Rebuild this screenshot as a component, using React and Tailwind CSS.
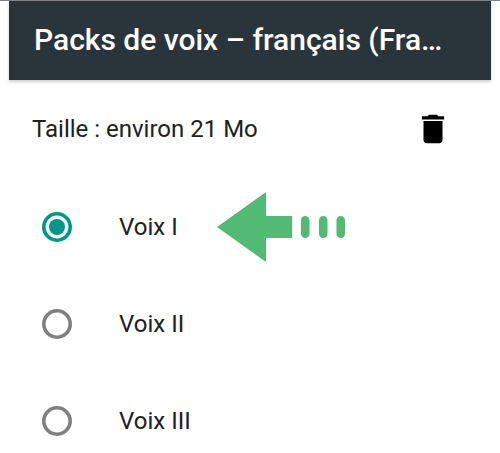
import React from 'react';

const voices = [
  { name: 'Voix I', selected: true },
  { name: 'Voix II', selected: false },
  { name: 'Voix III', selected: false },
];

const Radio = ({ selected }) => (
  <svg width="30" height="30" viewBox="0 0 30 30" fill="none">
    <circle cx="15" cy="15" r="13.2" strokeWidth="3.6" stroke={selected ? '#009688' : '#808080'} />
    {selected && <circle cx="15" cy="15" r="8" fill="#009688" />}
  </svg>
);

const Arrow = () => (
  <svg className="absolute left-[217px] top-[192px]" width="128" height="70" viewBox="0 0 128 70">
    <path d="M0 35 L49 0 V24 H75 V46 H49 V70 Z" fill="#52ba72" />
    <rect x="84" y="24" width="8.5" height="22" rx="4.25" fill="#52ba72" />
    <rect x="102" y="24" width="8.5" height="22" rx="4.25" fill="#52ba72" />
    <rect x="119.5" y="24" width="8.5" height="22" rx="4.25" fill="#52ba72" />
  </svg>
);

export default function App() {
  return (
    <div className="relative h-[453px] w-[500px] overflow-hidden bg-white font-['Roboto',sans-serif]">
      <div className="h-px bg-[#7d8487]" />
      <div className="mx-[9px] flex h-[79px] items-center bg-[#2a343b] pb-[2px] pl-[25px] shadow-[0_2px_3px_rgba(0,0,0,0.2)]">
        <h1 className="w-[415px] whitespace-nowrap text-[30px] font-medium text-white">Packs de voix – français (Fra…</h1>
      </div>

      <div className="flex h-[98px] items-center justify-between pl-[32px] pr-[48px]">
        <span className="text-[24px] text-[#212121]">Taille : environ 21 Mo</span>
        <svg width="38" height="38" viewBox="0 0 24 24" fill="#000">
          <path d="M6 19c0 1.1.9 2 2 2h8c1.1 0 2-.9 2-2V7H6v12zM19 4h-3.5l-1-1h-5l-1 1H5v2h14V4z" />
        </svg>
      </div>

      <div className="flex flex-col">
        {voices.map((voice) => (
          <div key={voice.name} className="flex h-[97px] items-center gap-[47px] pl-[42px]">
            <Radio selected={voice.selected} />
            <span className="text-[24px] text-[#212121]">{voice.name}</span>
          </div>
        ))}
      </div>

      <Arrow />
    </div>
  );
}
